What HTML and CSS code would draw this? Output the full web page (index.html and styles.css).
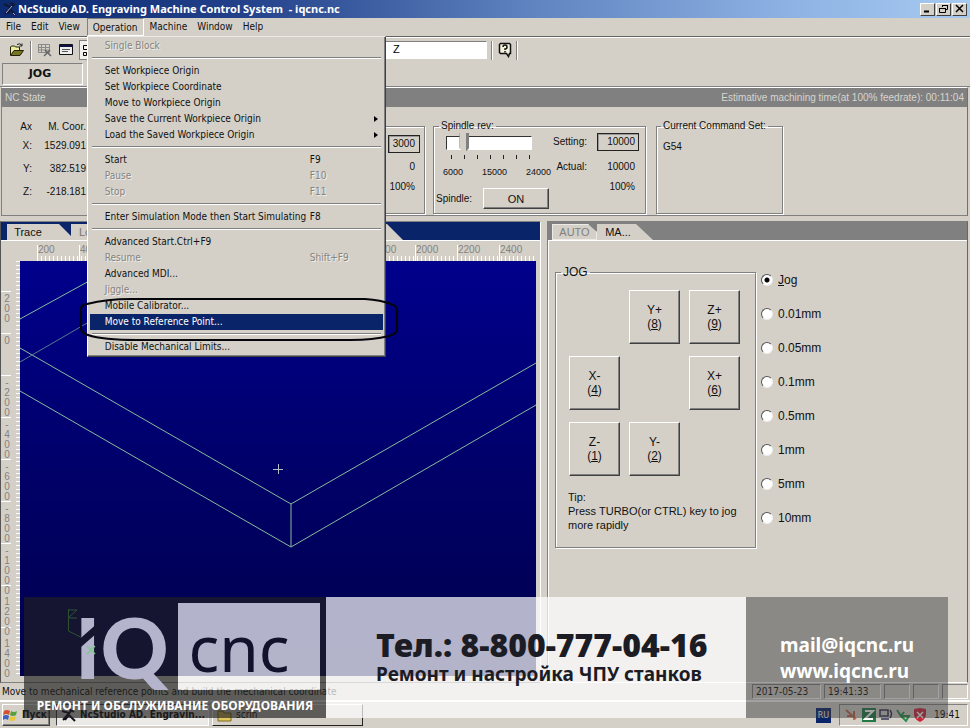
FILE: index.html
```html
<!DOCTYPE html>
<html lang="en">
<head>
<meta charset="utf-8">
<title>NcStudio AD. Engraving Machine Control System - iqcnc.nc</title>
<link rel="stylesheet" href="styles.css">
</head>
<body>
<header class="titlebar">
  <svg class="app-icon" width="14" height="16" viewBox="0 0 14 16"><path d="M1 3l6 3M7 2l5 2M2 13l8-9M5 13l2-5 5 6" stroke="#101838" stroke-width="2" fill="none"/><path d="M3 12l6-7M10 12l2 2" stroke="#b8a8d8" fill="none"/></svg>
  <h1>NcStudio AD. Engraving Machine Control System &nbsp;- iqcnc.nc</h1>
  <div class="win-controls">
    <button aria-label="Minimize"><svg width="11" height="10"><path d="M2 7.500h5" stroke="#000" stroke-width="2"/></svg></button>
    <button aria-label="Restore"><svg width="11" height="10"><path d="M4.500 3V1.500h5v4H8M4 1.500h6M1.500 4.500h6v4h-6zM1 4.500h7" stroke="#000" fill="none"/></svg></button>
    <button aria-label="Close"><svg width="11" height="10"><path d="M2 1l7 7M9 1L2 8" stroke="#000" stroke-width="1.500"/></svg></button>
  </div>
</header>

<nav class="menubar">
  <button>File</button><button>Edit</button><button>View</button>
  <div class="menu-root">
    <button class="open">Operation</button>
    <div class="menu">
      <button disabled>Single Block</button>
      <hr>
      <button>Set Workpiece Origin</button>
      <button>Set Workpiece Coordinate</button>
      <button>Move to Workpiece Origin</button>
      <button class="sub">Save the Current Workpiece Origin</button>
      <button class="sub">Load the Saved Workpiece Origin</button>
      <hr>
      <button>Start<kbd>F9</kbd></button>
      <button disabled>Pause<kbd>F10</kbd></button>
      <button disabled>Stop<kbd>F11</kbd></button>
      <hr>
      <button>Enter Simulation Mode then Start Simulating<kbd>F8</kbd></button>
      <hr>
      <button>Advanced Start.Ctrl+F9</button>
      <button disabled>Resume<kbd>Shift+F9</kbd></button>
      <button>Advanced MDI...</button>
      <button disabled>Jiggle...</button>
      <button>Mobile Calibrator...</button>
      <button class="selected">Move to Reference Point...</button>
      <hr>
      <button>Disable Mechanical Limits...</button>
      <svg class="marker" width="322" height="50" viewBox="0 0 322 50" fill="none" stroke="#05050c" stroke-width="2.200"><path d="M8 9Q28 4 52 4H286Q302 5 312 9Q318 11 318 15V34Q318 39 310 41Q294 45 272 45H58Q24 45 9 40Q2 38 2 33V14Q2 10 8 9Z"/></svg>
    </div>
  </div>
  <button>Machine</button><button>Window</button><button>Help</button>
</nav>

<div class="toolbar">
  <button aria-label="Open"><svg width="16" height="16"><path d="M1.500 13V5l1-1h3l1 1h4v3" fill="#f0eca0" stroke="#222208"/><path d="M1.500 13.500L5 8.500h9.500L11 13.500z" fill="#777722" stroke="#222208"/><path d="M8 2.500q3-2 5 1m0-2v2.500h-2.500" stroke="#222" fill="none"/></svg></button>
  <i class="sep"></i>
  <button class="second" aria-label="Delete row"><svg width="16" height="16"><path d="M1.500 2.500h11v8h-11zM1 5.500h11M4.500 3v8M8.500 3v8M2 8h10" stroke="#888" fill="none"/><path d="M8 8l6 6M13 8l-6 6" stroke="#666" stroke-width="1.500"/></svg></button>
  <button aria-label="Properties"><svg width="16" height="16"><path d="M1.500 2.500h13v10h-13z" fill="#eee" stroke="#111"/><path d="M1 4h14" stroke="#114" stroke-width="2"/><path d="M4 7.500h8M4 9.500h6" stroke="#555"/></svg></button>
  <button class="pressed" aria-label="View mode"><svg width="12" height="16"><path d="M2.500 3.500h6v4h-6zM2.500 10.500h3v3h-3z" stroke="#000" fill="none"/></svg></button>
  <div class="code-slot"><input class="code-line" value="Z" aria-label="Code line"></div>
  <i class="sep"></i>
  <button class="help" aria-label="Help"><svg width="14" height="16"><path d="M2.500 1.500h9l1 1v9h-1l-1 3-2-3h-6l-1-1v-8z" fill="#f4f2dc" stroke="#111" stroke-width="1.500"/><path d="M5 5q0-2 2-2t2 2-2 2v1M7 9v1.500" stroke="#111" stroke-width="1.500" fill="none"/></svg></button>
  <i class="sep"></i>
</div>
<div class="mode-row"><strong class="mode">JOG</strong></div>

<section class="state">
  <div class="state-head"><span>NC State</span><span>Estimative machining time(at 100% feedrate): 00:11:04</span></div>
  <div class="state-body">
    <table class="coords">
      <tr><th>Ax</th><td>M. Coor.</td></tr>
      <tr><th>X:</th><td>1529.091</td></tr>
      <tr><th>Y:</th><td>382.519</td></tr>
      <tr><th>Z:</th><td>-218.181</td></tr>
    </table>
    <fieldset class="feed"><output class="box">3000</output><output>0</output><output>100%</output></fieldset>
    <fieldset class="spindle">
      <legend>Spindle rev:</legend>
      <div class="speed">
        <input type="range" min="6000" max="24000" value="9000" aria-label="Spindle rev">
        <div class="ticks"></div>
        <div class="scale"><span>6000</span><span>15000</span><span>24000</span></div>
        <div class="power"><label for="on">Spindle:</label><button id="on" class="raised">ON</button></div>
      </div>
      <div class="readout">
        <span>Setting:</span><output class="box">10000</output>
        <span>Actual:</span><output>10000</output>
        <span></span><output>100%</output>
      </div>
    </fieldset>
    <fieldset class="commands"><legend>Current Command Set:</legend>G54</fieldset>
  </div>
</section>

<main class="work">
  <section class="trace">
    <div class="tabs navy"><button class="tab active">Trace</button><button class="tab hidden-tab">Log</button></div>
    <div class="ruler-x"><span>200</span><span>400</span><span></span><span></span><span></span><span></span><span></span><span></span><span>1800</span><span>2000</span><span>2200</span><span>2400</span></div>
    <div class="canvas-row">
      <div class="ruler-y"><span>200</span><span>0</span><span>-200</span><span>-400</span><span>-600</span><span>-800</span><span>-1000</span><span class="unsigned">1200</span><span class="unsigned">1400</span></div>
      <div class="view">
        <svg width="100%" height="100%" viewBox="20 261 516 415" preserveAspectRatio="xMinYMin slice" fill="none">
          <path d="M20 319L120 264M20 348L291 504L536 363M20 391L291 547L536 405M291 504V547" stroke="#86bd9b"/>
          <path d="M20 362L120 304" stroke="#557c88"/>
          <path d="M273 469.500h10M278.500 464v10" stroke="#b4bfc4"/>
          <path d="M68 610h9l-9 8h9M68.500 609v22l12 6 10-9" stroke="#48b060"/>
        </svg>
      </div>
    </div>
  </section>
  <section class="manual">
    <div class="tabs gray"><button class="tab">AUTO</button><button class="tab active">MA...</button></div>
    <div class="manual-body">
      <fieldset class="jog">
        <legend>JOG</legend>
        <div class="pad">
          <i></i><button class="raised">Y+<br>(<u>8</u>)</button><button class="raised">Z+<br>(<u>9</u>)</button>
          <button class="raised">X-<br>(<u>4</u>)</button><i></i><button class="raised">X+<br>(<u>6</u>)</button>
          <button class="raised">Z-<br>(<u>1</u>)</button><button class="raised">Y-<br>(<u>2</u>)</button><i></i>
        </div>
        <p>Tip:<br>Press TURBO(or CTRL) key to jog<br>more rapidly</p>
      </fieldset>
      <div class="steps">
        <label><input type="radio" name="step" checked><span><u>J</u>og</span></label>
        <label><input type="radio" name="step">0.01mm</label>
        <label><input type="radio" name="step">0.05mm</label>
        <label><input type="radio" name="step">0.1mm</label>
        <label><input type="radio" name="step">0.5mm</label>
        <label><input type="radio" name="step">1mm</label>
        <label><input type="radio" name="step">5mm</label>
        <label><input type="radio" name="step">10mm</label>
      </div>
    </div>
  </section>
</main>

<div class="status">
  <span class="hint">Move to mechanical reference points and build the mechanical coordinate</span>
  <span class="cell date">2017-05-23</span><span class="cell time">19:41:33</span><span class="cell"></span><span class="cell"></span><span class="cell"></span>
</div>

<footer class="taskbar">
  <button class="start raised"><svg width="16" height="16"><path d="M1 4q3-2 6 0l-1 4q-3-2-6 0z" fill="#d5502c"/><path d="M8 4q3 2 6 0l-1 4q-3 2-6 0z" fill="#58a03c"/><path d="M0 9q3-2 6 0l-1 4q-3-2-5 0z" fill="#3c62c4"/><path d="M7 9q3 2 6 0l-1 4q-3 2-6 0z" fill="#e8c838"/></svg>Пуск</button>
  <button class="task current"><svg width="16" height="16"><path d="M1 4l7 2M8 2l5 3M2 13l8-9M4 13l4-5 6 6" stroke="#112" stroke-width="2" fill="none"/></svg>NcStudio AD. Engravin...</button>
  <button class="task"><svg width="16" height="14"><path d="M1 3h5l1 2h7v8H1z" fill="#e0c85c" stroke="#7a6820"/></svg>scrin</button>
  <span class="lang">RU</span>
  <div class="tray">
    <svg width="16" height="16"><path d="M2 3l10 9M3 9h6M10 4v9" stroke="#c0694c" stroke-width="2"/></svg>
    <svg width="16" height="16"><path d="M1 1h14v14H1z" fill="#217a45"/><path d="M4 4h8L4 12h8" stroke="#fff" stroke-width="2" fill="none"/></svg>
    <svg width="16" height="16"><path d="M2 3h8v6H2zM3 12h8M12 3q3 4 0 8" stroke="#335" stroke-width="1.500" fill="none"/></svg>
    <svg width="16" height="16"><path d="M2 3l4 6 3-4M6 9l5 5 3-5z" stroke="#2d8c4c" stroke-width="2" fill="none"/></svg>
    <svg width="16" height="16"><path d="M2 2l6-1 6 1v6q-1 5-6 7-5-2-6-7z" fill="#cc2a3c"/><path d="M5 5l6 6M11 5l-6 6" stroke="#fff" stroke-width="1.500"/></svg>
    <time>19:41</time>
  </div>
</footer>

<aside class="banner">
  <div class="brand">
    <div class="logo">
      <div class="iq">IQ<svg class="cut" width="22" height="38" viewBox="0 0 22 38"><path d="M0 25L22 6" stroke="#15152d" stroke-width="7"/><path d="M8 27l8 8M16 27l-8 8" stroke="#7fc98c" stroke-width="1.500"/></svg></div>
      <div class="cnc">cnc</div>
    </div>
    <p>РЕМОНТ И ОБСЛУЖИВАНИЕ ОБОРУДОВАНИЯ</p>
  </div>
  <div class="phone"><strong>Тел.: 8-800-777-04-16</strong><span>Ремонт и настройка ЧПУ станков</span></div>
  <div class="contact"><a href="#">mail@iqcnc.ru</a><a href="#">www.iqcnc.ru</a></div>
</aside>
</body>
</html>
```
FILE: styles.css
```css
:root {
  --face: #d4d0c8;
  --shade: #808080;
  --dark: #404040;
  --ui: "DejaVu Sans Condensed", "DejaVu Sans", sans-serif;
  --arial: "Liberation Sans", Arial, sans-serif;
  --myriad: "Noto Sans", "Open Sans", sans-serif;
}
* { box-sizing: border-box; }
body {
  margin: 0;
  min-height: 100vh;
  display: flex;
  flex-direction: column;
  position: relative;
  overflow: hidden;
  background: var(--face);
  font: 10px/12px var(--arial);
  color: #111;
}
button { border: 0; padding: 0; margin: 0; background: none; font: inherit; color: inherit; }
fieldset { margin: 0; min-width: 0; border: 1px solid var(--shade); box-shadow: 1px 1px 0 #fff, inset 1px 1px 0 #fff; }
.raised { background: var(--face); border: 1px solid; border-color: #fff #404040 #404040 #fff; box-shadow: inset -1px -1px 0 var(--shade); }

.titlebar { height: 18px; display: flex; align-items: center; padding: 0 3px; background: linear-gradient(90deg, #0c2a70 0, #23418a 25%, #5f84c0 55%, #8fb3e4 82%, #a6caf0); }
.titlebar h1 { margin: 0 0 0 1px; flex: 1; font: bold 11px/16px var(--myriad); color: #fff; white-space: nowrap; }
.win-controls { display: flex; gap: 1px; }
.win-controls button { width: 15px; height: 13px; display: grid; place-items: center; background: var(--face); border: 1px solid; border-color: #fff var(--dark) var(--dark) #fff; }

.menubar { height: 19px; display: flex; font: 10px/18px var(--ui); padding-left: 1px; border-bottom: 1px solid #66645f; }
.menubar > button { padding: 0 5px; }
.menu-root { position: relative; margin: 0 1px 0 2px; }
.open { height: 18px; padding: 1px 5px 0; border: 1px solid; border-color: var(--shade) #fff #fff var(--shade); line-height: 16px; }
.menu { position: absolute; z-index: 2; top: 18px; left: 0; width: 299px; padding: 1px 2px; background: var(--face); border: 1px solid; border-color: #eceae6 var(--dark) var(--dark) #fff; box-shadow: inset -1px -1px 0 var(--shade); }
.menu button { display: flex; width: 100%; height: 16px; padding: 0 5px 0 15px; align-items: center; line-height: 16px; white-space: nowrap; position: relative; }
.menu button:disabled { color: #87847e; text-shadow: 1px 1px 0 #f0eeea; }
.menu kbd { position: absolute; left: 220px; font: inherit; }
.menu hr { margin: 3px 2px 4px; border: 0; border-top: 1px solid var(--shade); border-bottom: 1px solid #fff; }
.menu .selected { background: #0a246a; color: #fff; }
.menu .sub::after { content: ""; margin-left: auto; border: 3px solid transparent; border-left: 4px solid #000; border-right: 0; }
.marker { position: absolute; left: -9px; bottom: 11px; }

.toolbar { height: 25px; display: flex; align-items: center; border-top: 1px solid #fff; padding-left: 9px; }
.toolbar button { display: grid; place-items: center; width: 16px; margin-right: 5px; }
.toolbar .sep { width: 2px; height: 19px; border-left: 1px solid var(--shade); border-right: 1px solid #fff; }
.toolbar .second { margin-left: 5px; }
.toolbar .pressed { background: #f2f0ec; border: 1px solid var(--shade); height: 20px; }
.code-slot { flex: 0 0 387px; }
.code-line { width: 100%; height: 18px; border: 1px solid; border-color: var(--shade) #fff #fff var(--shade); background: #fff; padding: 0 0 3px 292px; font: 11px/13px var(--arial); display: block; }
.toolbar .help { width: 14px; margin: 0 4px 0 5px; }
.code-slot + .sep { margin-left: 4px; }
.mode-row { height: 25px; padding: 1px 2px; border-bottom: 1px solid var(--shade); }
.mode { display: block; width: 81px; border: 1px solid; border-color: var(--shade) #fff #fff var(--shade); font: bold 11px/20px "DejaVu Sans", sans-serif; text-align: center; padding-right: 5px; }

.state { margin: 0 2px 0 1px; border: 1px solid; border-color: #fff #707070 var(--shade) var(--shade); padding-bottom: 1px; }
.state-head { height: 19px; display: flex; justify-content: space-between; padding: 0 3px; background: #808080; color: #d8d5ce; line-height: 19px; }
.state-body { display: flex; padding-top: 13px; }
.coords { width: 84px; border-collapse: collapse; align-self: flex-start; margin-top: -1px; }
.coords th, .coords td { padding: 0; height: 23px; text-align: right; font-weight: normal; white-space: nowrap; }
.coords th { width: 30px; }
.coords tr:first-child > * { height: 15px; }
.feed { flex: 0 0 240px; margin: 6px 8px 0 99px; padding: 8px 4px 0 0; display: flex; flex-direction: column; align-items: flex-end; gap: 8px; }
.box { border: 1px solid #222; box-shadow: inset 1px 1px 0 #999; }
.feed output { padding: 0 5px; }
.feed .box { padding: 2px 4px; height: 18px; }
.spindle { flex: 0 0 213px; display: flex; padding: 0; height: 94px; }
.spindle legend, .commands legend, .jog legend { padding: 0 2px; margin-left: 5px; }
.spindle legend, .commands legend { height: 12px; }
.speed { width: 118px; }
.speed input { appearance: none; display: block; width: 86px; height: 14px; margin: 4px 0 0 12px; background: #fff; border: 1px solid; border-color: #333 #fff #fff #333; overflow: visible; }
.speed input::-webkit-slider-thumb { appearance: none; width: 10px; height: 20px; background: linear-gradient(90deg, #a09c94 0 1px, #d4d0c8 1px 7px, #808080 7px); clip-path: polygon(0 0, 100% 0, 100% 75%, 50% 100%, 0 75%); }
.ticks { width: 79px; height: 4px; margin: 5px 0 0 17px; background: repeating-linear-gradient(90deg, #222 0 1px, transparent 1px 13px); }
.scale { display: flex; justify-content: space-between; width: 108px; margin: 7px 0 0 9px; font-size: 9px; }
.power { display: flex; align-items: center; justify-content: space-between; width: 115px; padding-left: 2px; margin-top: 10px; }
.power button { width: 66px; height: 21px; font-size: 11px; }
.readout { display: grid; grid-template-columns: 35px 42px; column-gap: 10px; align-content: start; align-items: center; text-align: right; grid-template-rows: 20px 30px 10px; }
.readout output { padding-right: 4px; }
.readout .box { padding: 2px 3px; height: 18px; }
.commands { flex: 0 0 127px; margin-left: 10px; padding: 9px 6px; height: 94px; }
.commands legend { margin-left: -2px; }

.work { flex: 1; display: flex; gap: 6px; margin-top: 5px; padding-right: 2px; }
.trace { flex: 0 0 541px; min-width: 0; border: 1px solid var(--shade); border-right-color: #fff; display: flex; flex-direction: column; border-left-color: #555; padding-right: 4px; }
.tabs { display: flex; height: 19px; border-top: 2px solid var(--shade); padding-left: 6px; border-bottom: 1px solid #fff; }
.navy { background: #0a246a; border-top-color: #0a246a; margin-right: -4px; }
.gray { background: #808080; }
.tab { background: var(--face); font: 11px/16px var(--arial); }
.tab.active { z-index: 1; clip-path: polygon(0 0, calc(100% - 16px) 0, 100% 100%, 0 100%); }
.navy .tab.active { width: 68px; padding: 0 33px 0 7px; }
.navy .hidden-tab { flex: 0 0 332px; margin-left: -4px; padding-left: 8px; text-align: left; color: #77746e; clip-path: polygon(0 0, calc(100% - 16px) 0, 100% 100%, 0 100%); }
.gray .tab { width: 45px; color: var(--shade); box-shadow: inset 0 0 0 1px #eceae6; clip-path: polygon(0 0, 36px 0, 100% 50%, 100% 100%, 0 100%); }
.gray .tab.active { width: 56px; padding-right: 14px; color: #111; box-shadow: none; clip-path: polygon(0 0, calc(100% - 17px) 0, 100% 100%, 0 100%); }
.ruler-x, .ruler-y { color: #85827d; font: 10px/10px var(--arial); }
.ruler-x { height: 20px; display: flex; margin-left: 36px; padding-top: 4px; overflow: hidden; background: repeating-linear-gradient(90deg, #fff 0 1px, transparent 1px 4px) bottom / 100% 5px no-repeat; }
.ruler-x span { flex: 0 0 42px; border-left: 1px solid #fff; }
.canvas-row { flex: 1; display: flex; margin-bottom: 6px; }
.ruler-y { flex: 0 0 19px; height: 415px; padding-top: 30px; background: repeating-linear-gradient(#fff 0 1px, transparent 1px 4px) right / 4px 100% no-repeat; }
.ruler-y span { display: block; height: 42px; border-top: 1px solid #fff; width: 10px; padding: 2px 1px 0 3px; text-align: center; word-break: break-all; }
.ruler-y .unsigned { padding-top: 11px; }
.view { flex: 1; position: relative; background: linear-gradient(#00008c, #000066 55%, #00004c); }
.view svg { position: absolute; inset: 0; }

.manual { flex: 1; border: 1px solid var(--shade); border-right-color: #666; border-bottom-color: #fff; box-shadow: inset 1px 0 0 #fff; }
.manual .tabs { padding-left: 4px; }
.manual-body { display: flex; align-items: flex-start; padding: 24px 0 0 7px; font: 12px/14px var(--arial); }
.jog { flex: 0 0 201px; height: 283px; padding: 11px 13px 0; }
.jog legend { height: 14px; margin-left: -8px; }
.pad { display: grid; grid-template-columns: repeat(3, 51px); grid-auto-rows: 54px; gap: 12px 9px; }
.jog p { margin: 14px -4px 0 -1px; font: 11px/14px var(--arial); white-space: nowrap; }
.steps { display: flex; flex-direction: column; gap: 20px; padding: 8px 0 0 5px; }
.steps label { display: flex; align-items: center; gap: 5px; height: 14px; }
.steps input { appearance: none; width: 12px; height: 12px; margin: 0; border-radius: 50%; background: #fff; border: 1px solid; border-color: #555 #eee #eee #555; }
.steps input:checked { background: radial-gradient(#000 0 2px, #fff 3px); }

.status { height: 18px; display: flex; gap: 3px; padding: 1px 2px; font: 10px/16px var(--ui); border-bottom: 1px solid #fff; }
.hint { flex: 1; white-space: nowrap; }
.cell { width: 26px; border: 1px solid; border-color: var(--shade) #fff #fff var(--shade); line-height: 14px; padding-left: 3px; }
.date { width: 69px; }
.time { width: 57px; }
.taskbar { height: 27px; display: flex; align-items: center; gap: 3px; padding: 0 2px; border-top: 1px solid #fff; font: 10px/16px var(--ui); }
.start, .task { display: flex; align-items: center; gap: 3px; height: 22px; white-space: nowrap; overflow: hidden; }
.start { width: 48px; font-weight: bold; }
.task { width: 151px; padding-left: 4px; border: 1px solid; border-color: #fff #222 #222 #fff; }
.current { width: 153px; margin-left: 3px; font-weight: bold; background: #eceae6; border-color: #404040 #fff #fff #404040; }
.lang { margin-left: auto; width: 15px; background: #0a246a; color: #fff; font-size: 9px; text-align: center; height: 15px; line-height: 15px; }
.tray { width: 129px; height: 22px; margin-left: 5px; padding: 0 7px 0 4px; display: flex; align-items: center; gap: 1px; border: 1px solid; border-color: var(--shade) #fff #fff var(--shade); }
.tray time { margin-left: auto; }

.banner { position: absolute; z-index: 3; left: 24px; right: 22px; bottom: 10px; height: 121px; display: flex; font-family: var(--myriad); font-weight: bold; }
.brand { flex: 0 0 302px; overflow: hidden; }
.logo { display: flex; }
.iq { position: relative; z-index: 1; width: 154px; height: 93px; padding-left: 51px; font: 900 84px/99px Lato, sans-serif; color: #b4b4cc; overflow: hidden; }
.cut { position: absolute; left: 55px; top: 22px; }
.cnc { width: 142px; height: 87px; margin-top: 6px; background: rgba(255, 255, 255, .7); box-shadow: 0 0 0 200px rgba(32, 32, 32, .66); color: #12122c; font: 64px/90px var(--myriad); text-align: center; padding-right: 20px; }
.brand p { position: relative; margin: 7px 0 0; text-align: center; color: #fff; font-size: 12px; line-height: 18px; white-space: nowrap; }
.phone { flex: 1; background: rgba(255, 255, 255, .7); color: #1c1c24; padding: 30px 0 0 50px; display: flex; flex-direction: column; white-space: nowrap; }
.phone strong { font-size: 32px; line-height: 36px; }
.phone span { font-size: 19px; line-height: 22px; }
.contact { flex: 0 0 202px; background: rgba(60, 60, 60, .48); padding: 35px 0 0 34px; display: flex; flex-direction: column; }
.contact a { color: #fff; text-decoration: none; font-size: 19px; line-height: 26px; }
```
